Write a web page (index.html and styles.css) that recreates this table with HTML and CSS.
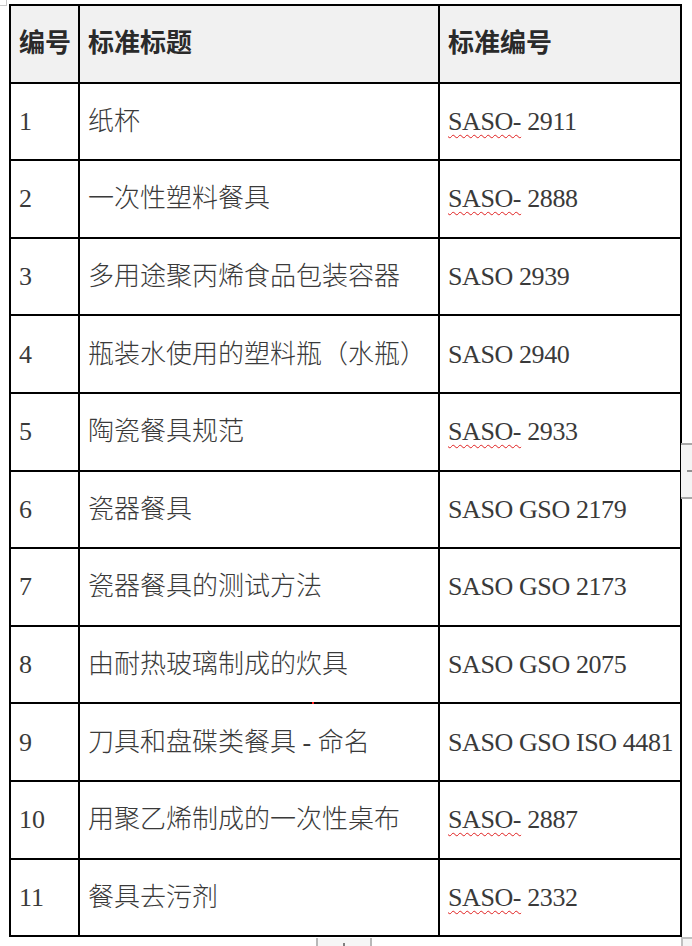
FILE: index.html
```html
<!DOCTYPE html>
<html lang="zh-CN">
<head>
<meta charset="utf-8">
<title>标准列表</title>
<link rel="stylesheet" href="styles.css">
</head>
<body>
<div class="page">
  <span class="corner-mark"></span>
  <table class="std-table">
    <colgroup>
      <col class="c-no">
      <col class="c-title">
      <col class="c-code">
    </colgroup>
    <thead>
      <tr>
        <th>编号</th>
        <th>标准标题</th>
        <th>标准编号</th>
      </tr>
    </thead>
    <tbody>
      <tr><td>1</td><td>纸杯</td><td class="code"><span class="spell">SASO-</span> 2911</td></tr>
      <tr><td>2</td><td>一次性塑料餐具</td><td class="code"><span class="spell">SASO-</span> 2888</td></tr>
      <tr><td>3</td><td>多用途聚丙烯食品包装容器</td><td class="code">SASO 2939</td></tr>
      <tr><td>4</td><td>瓶装水使用的塑料瓶（水瓶）</td><td class="code">SASO 2940</td></tr>
      <tr><td>5</td><td>陶瓷餐具规范</td><td class="code"><span class="spell">SASO-</span> 2933</td></tr>
      <tr><td>6</td><td>瓷器餐具</td><td class="code">SASO GSO 2179</td></tr>
      <tr><td>7</td><td>瓷器餐具的测试方法</td><td class="code">SASO GSO 2173</td></tr>
      <tr><td>8</td><td>由耐热玻璃制成的炊具</td><td class="code">SASO GSO 2075</td></tr>
      <tr><td>9</td><td>刀具和盘碟类餐具 - 命名</td><td class="code">SASO GSO ISO 4481</td></tr>
      <tr><td>10</td><td>用聚乙烯制成的一次性桌布</td><td class="code"><span class="spell">SASO-</span> 2887</td></tr>
      <tr><td>11</td><td>餐具去污剂</td><td class="code"><span class="spell">SASO-</span> 2332</td></tr>
    </tbody>
  </table>
  <span class="red-dot"></span>
  <span class="side-handle"><span class="handle-dash"></span></span>
  <span class="bottom-handle"><span class="handle-dot"></span></span>
  <span class="corner-box"></span>
</div>
</body>
</html>
```

FILE: styles.css
```css
html, body {
  margin: 0;
  padding: 0;
  background: #ffffff;
}

.page {
  position: relative;
  width: 692px;
  height: 946px;
  overflow: hidden;
  padding: 4px 0 0 9px;
  box-sizing: border-box;
  font-family: "Liberation Serif", "Noto Sans CJK SC", serif;
  color: #333333;
}

.std-table {
  border-collapse: collapse;
  table-layout: fixed;
  width: 671px;
  font-size: 26px;
}

.c-no { width: 69px; }
.c-title { width: 360px; }
.c-code { width: 242px; }

.std-table th,
.std-table td {
  border: 2px solid #000000;
  padding: 0 0 0 8px;
  height: 75.6px;
  text-align: left;
  vertical-align: middle;
  white-space: nowrap;
  line-height: 1.2;
}

.std-table td {
  font-weight: 300;
  color: #3a3a3a;
}

.std-table th {
  background: #f1f1f1;
  font-weight: 700;
  color: #2a2a2a;
}

.std-table td.code {
  letter-spacing: -0.4px;
}

.spell {
  text-decoration: underline wavy #e02020;
  text-decoration-thickness: 1px;
  text-underline-offset: 4px;
}

.corner-mark {
  position: absolute;
  left: 0;
  top: 0;
  width: 6px;
  height: 5px;
  border-right: 1px solid #c8c8c8;
  border-bottom: 1px solid #c8c8c8;
}

.red-dot {
  position: absolute;
  left: 312px;
  top: 702px;
  width: 2px;
  height: 2px;
  background: #ff2020;
}

.side-handle {
  position: absolute;
  left: 681px;
  top: 443px;
  width: 11px;
  height: 52px;
  background: #f4f4f4;
  border-top: 2px solid #a8a8a8;
  border-bottom: 2px solid #a8a8a8;
}

.handle-dash {
  position: absolute;
  left: 6px;
  top: 25px;
  width: 6px;
  height: 2px;
  background: #909090;
}

.bottom-handle {
  position: absolute;
  left: 316px;
  top: 938px;
  width: 52px;
  height: 10px;
  background: #f6f6f6;
  border-left: 2px solid #b8b8b8;
  border-right: 2px solid #b8b8b8;
}

.handle-dot {
  position: absolute;
  left: 25px;
  top: 5px;
  width: 2px;
  height: 3px;
  background: #808080;
}

.corner-box {
  position: absolute;
  left: 681px;
  top: 937px;
  width: 11px;
  height: 9px;
  background: #f4f4f4;
  border-top: 2px solid #c0c0c0;
  border-left: 2px solid #c0c0c0;
}
```
